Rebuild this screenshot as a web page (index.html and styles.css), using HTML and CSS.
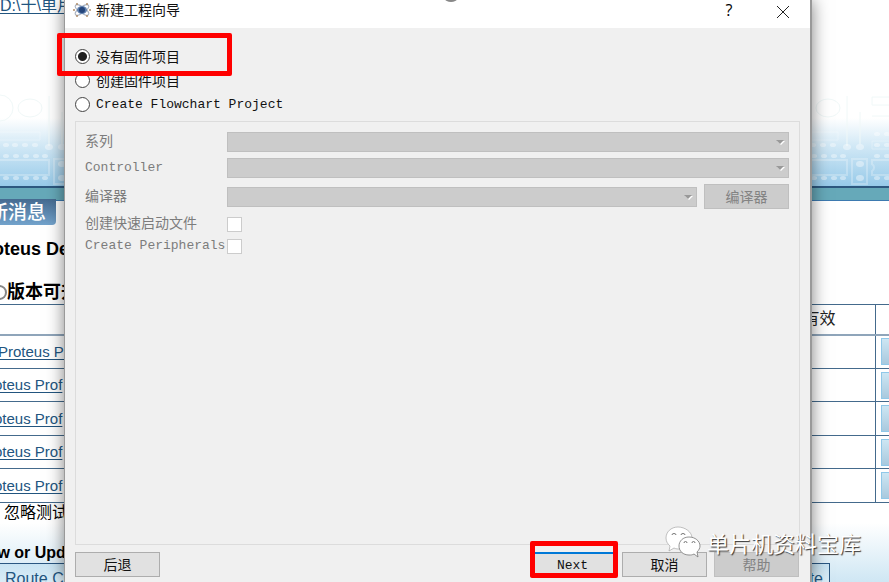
FILE: index.html
```html
<!DOCTYPE html>
<html lang="zh-CN">

<head>
    <meta charset="UTF-8">
    <meta name="viewport" content="width=device-width, initial-scale=1.0">
    <title>新建工程向导</title>
    <link rel="stylesheet" href="styles.css">
</head>

<body>
    <!-- Start page behind the wizard -->
    <main class="home">
        <header class="banner">
            <a class="recent" href="#">D:\十\单片</a>
            <svg class="board" width="1600" height="186" fill="none" stroke="#fff" stroke-width="2">
                <defs>
                    <g id="chips">
                        <g stroke="#f0f8f8" stroke-width="1">
                            <circle cx="0" cy="108" r="13" />
                            <ellipse cx="30" cy="108" rx="12" ry="9" />
                            <path d="M49 96v50M62 112v32M74 97h30v8H74zM74 116h30v14" />
                        </g>
                        <g opacity=".25">
                            <path d="M-40 160h89v15h-89zM54 159h15v25H54zM74 160h40v15H74v-4a4 4 0 0 0 0-7z" />
                            <path stroke-width="1" d="M-40 140h80v-8h-80M74 141h40v8H74z" />
                        </g>
                        <g fill="#fff" stroke="none" opacity=".4">
                            <ellipse cx="6" cy="145" rx="3" ry="2" />
                            <ellipse cx="15" cy="145" rx="3" ry="2" />
                            <ellipse cx="25" cy="145" rx="3" ry="2" />
                            <ellipse cx="35" cy="145" rx="3" ry="2" />
                            <ellipse cx="49" cy="147" rx="4" ry="3" />
                            <ellipse cx="62" cy="147" rx="4" ry="3" />
                            <ellipse cx="79" cy="145" rx="3" ry="2" />
                            <ellipse cx="89" cy="145" rx="3" ry="2" />
                            <ellipse cx="79" cy="134" rx="3" ry="2" />
                            <ellipse cx="89" cy="134" rx="3" ry="2" />
                            <ellipse cx="6" cy="156" rx="3" ry="2" />
                            <ellipse cx="16" cy="156" rx="3" ry="2" />
                            <ellipse cx="26" cy="156" rx="3" ry="2" />
                            <ellipse cx="36" cy="156" rx="3" ry="2" />
                            <ellipse cx="45" cy="156" rx="3" ry="2" />
                            <ellipse cx="79" cy="156" rx="3" ry="2" />
                            <ellipse cx="89" cy="156" rx="3" ry="2" />
                            <ellipse cx="62" cy="164" rx="4" ry="3" />
                            <ellipse cx="62" cy="178" rx="4" ry="3" />
                            <ellipse cx="6" cy="178" rx="3" ry="2" />
                            <ellipse cx="16" cy="178" rx="3" ry="2" />
                            <ellipse cx="26" cy="178" rx="3" ry="2" />
                            <ellipse cx="36" cy="178" rx="3" ry="2" />
                            <ellipse cx="45" cy="178" rx="3" ry="2" />
                            <ellipse cx="79" cy="178" rx="3" ry="2" />
                            <ellipse cx="89" cy="178" rx="3" ry="2" />
                        </g>
                    </g>
                </defs>
                <use href="#chips" />
                <use href="#chips" x="798" />
            </svg>
        </header>
        <div class="band"></div>

        <section class="news">
            <h2 class="tab">新消息</h2>
            <h3 class="product">Proteus De</h3>
            <h4 class="update"><span class="bullet"></span>版本可升</h4>
            <table class="versions">
                <colgroup>
                    <col>
                    <col class="col-valid">
                    <col class="col-action">
                </colgroup>
                <thead>
                    <tr>
                        <th></th>
                        <th>有效</th>
                        <th></th>
                    </tr>
                </thead>
                <tbody>
                    <tr>
                        <td class="current"><a href="#">Proteus Pro</a></td>
                        <td></td>
                        <td><button class="get" aria-label="下载"></button></td>
                    </tr>
                    <tr>
                        <td><a href="#">Proteus Prof</a></td>
                        <td></td>
                        <td><button class="get" aria-label="下载"></button></td>
                    </tr>
                    <tr>
                        <td><a href="#">Proteus Prof</a></td>
                        <td></td>
                        <td><button class="get" aria-label="下载"></button></td>
                    </tr>
                    <tr>
                        <td><a href="#">Proteus Prof</a></td>
                        <td></td>
                        <td><button class="get" aria-label="下载"></button></td>
                    </tr>
                    <tr>
                        <td><a href="#">Proteus Prof</a></td>
                        <td></td>
                        <td><button class="get" aria-label="下载"></button></td>
                    </tr>
                </tbody>
            </table>
            <p class="ignore">忽略测试</p>
        </section>

        <section class="videos">
            <h3 class="videos-title">New or Upd</h3>
            <div class="video-row">
                <a class="video" href="#"><span>Route Co</span><span>te</span></a>
            </div>
        </section>
    </main>

    <!-- Wizard window -->
    <form class="wizard">
        <header class="titlebar">
            <svg class="app-icon" width="18" height="16" viewBox="0 0 18 16" fill="none">
                <g stroke="#a9b2c0">
                    <ellipse cx="9" cy="8" rx="8" ry="3" transform="rotate(35 9 8)" />
                    <ellipse cx="9" cy="8" rx="8" ry="3" transform="rotate(-35 9 8)" />
                </g>
                <ellipse cx="9" cy="8" rx="5" ry="4" fill="#5f7fae" />
                <circle cx="9" cy="8" r="3" fill="#23447a" />
                <g fill="#b08d68">
                    <circle cx="4" cy="2" r="1" />
                    <circle cx="14" cy="2" r="1" />
                    <circle cx="4" cy="14" r="1" />
                    <circle cx="14" cy="14" r="1" />
                    <circle cx="1" cy="8" r="1" />
                    <circle cx="17" cy="8" r="1" />
                </g>
            </svg>
            <h1>新建工程向导</h1>
            <button type="button" class="window-btn">?</button>
            <button type="button" class="window-btn" aria-label="关闭">
                <svg width="14" height="14" viewBox="0 0 14 14" stroke="#222">
                    <path d="M1 1l12 12M13 1L1 13" />
                </svg>
            </button>
        </header>

        <div class="choices">
            <label><input type="radio" name="firmware" checked>没有固件项目</label>
            <label><input type="radio" name="firmware">创建固件项目</label>
            <label class="latin"><input type="radio" name="firmware">Create Flowchart Project</label>
        </div>

        <fieldset class="options" disabled>
            <div class="field">
                <label for="family">系列</label>
                <div class="select"><select id="family"></select></div>
            </div>
            <div class="field">
                <label class="latin" for="controller">Controller</label>
                <div class="select"><select id="controller"></select></div>
            </div>
            <div class="field field-compiler">
                <label for="compiler">编译器</label>
                <div class="select"><select id="compiler"></select></div>
                <button type="button" class="btn">编译器</button>
            </div>
            <div class="field field-check">
                <label for="quick">创建快速启动文件</label>
                <input type="checkbox" id="quick">
            </div>
            <div class="field field-check">
                <label class="latin" for="peripherals">Create Peripherals</label>
                <input type="checkbox" id="peripherals">
            </div>
        </fieldset>

        <footer class="actions">
            <button type="button" class="btn btn-back">后退</button>
            <button type="submit" class="btn btn-next latin">Next</button>
            <button type="button" class="btn">取消</button>
            <button type="button" class="btn" disabled>帮助</button>
        </footer>
        <span class="grip"></span>
        <span class="mark mark-choice"></span>
        <span class="mark mark-next"></span>
    </form>

    <!-- Account signature -->
    <div class="signature">
        <svg width="36" height="32" viewBox="0 0 36 32" fill="#fff">
            <path stroke="#999" stroke-width=".6"
                d="M13 1C6 1 1 6 1 12c0 4 2 6 4 8l-1 5 5-3c2 1 4 1 6 1 6 0 12-5 12-11S20 1 13 1z" />
            <path stroke="#777" stroke-width=".8"
                d="M24 11c-6 0-10 4-10 9s4 9 10 9c2 0 3 0 5-1l4 3-1-5c2-2 3-4 3-6 0-5-5-9-11-9z" />
            <path fill="none" stroke="#777"
                d="M7 9a2 1.500 0 0 1 4 0M16 9a2 1.500 0 0 1 4 0M19 17a1.500 1.500 0 0 1 3 0M27 17a1.500 1.500 0 0 1 3 0" />
        </svg>
        <span>单片机资料宝库</span>
    </div>
</body>

</html>
```
FILE: styles.css
```css
* {
    box-sizing: border-box;
}

body {
    margin: 0;
    height: 100vh;
    overflow: hidden;
    position: relative;
    background-color: #fff;
    font-family: "Liberation Sans", "Noto Sans CJK SC", sans-serif;
}

h1,
h2,
h3,
h4,
p {
    margin: 0;
}

a {
    color: #22557f;
}

/* Start page */
.home {
    height: 100%;
    overflow: hidden;
    display: flex;
    flex-direction: column;
}

.banner {
    flex: none;
    height: 188px;
    overflow: hidden;
    position: relative;
    background: linear-gradient(#fff 118px, #d3e9f6 145px, #97cae9);
    border-bottom: 2px solid #2d587f;
}

.recent {
    display: block;
    margin-top: -5px;
    font-size: 16px;
    line-height: 22px;
    text-underline-offset: 2px;
}

.board {
    position: absolute;
    top: 0;
    left: 0;
}

.band {
    flex: none;
    height: 13px;
    background-color: #66a9b9;
    border-bottom: 1px solid #3d7ab0;
}

.news {
    flex: none;
    margin: 0 -40px 0 -10px;
}

.tab {
    width: 66px;
    height: 26px;
    margin-top: -2px;
    padding-right: 10px;
    display: flex;
    justify-content: flex-end;
    overflow: hidden;
    border-radius: 0 0 4px 0;
    background: linear-gradient(#456a90, #73a3cc);
    color: #fff;
    font-size: 19px;
    font-weight: 500;
    line-height: 28px;
    white-space: nowrap;
}

.product {
    margin: 13px 0 0 -16px;
    font-size: 18px;
    line-height: 22px;
}

.update {
    display: flex;
    align-items: center;
    margin: 20px 0 0 2px;
    font-size: 18px;
    line-height: 24px;
}

.bullet {
    width: 15px;
    height: 15px;
    border: 2px solid #888;
    border-radius: 50%;
}

.versions {
    width: 100%;
    table-layout: fixed;
    border-collapse: collapse;
    font-size: 15px;
    line-height: 20px;
}

.col-valid {
    width: 112px;
}

.col-action {
    width: 53px;
}

.versions th,
.versions td {
    height: 34px;
    padding: 0 5px;
    border: 1px solid #446a8c;
}

.versions th {
    height: 30px;
    border-bottom: 2px solid #8fa5ba;
    color: #222;
    font-size: 16px;
    font-weight: normal;
}

.versions tr:nth-child(even) td {
    height: 33px;
}

.versions td:first-child {
    text-indent: -17px;
}

.versions td.current {
    text-indent: 2px;
}

.versions a {
    text-underline-offset: 2px;
}

.get {
    display: block;
    width: 42px;
    height: 27px;
    padding: 0;
    border: 1px solid #90c8e9;
    background: linear-gradient(#cde6f3, #a9c9de);
}

.ignore {
    padding-left: 14px;
    font-size: 16px;
    line-height: 20px;
}

.videos {
    flex: 1;
    padding-top: 20px;
    background: linear-gradient(#fff, #c4e1f1);
}

.videos-title {
    margin-left: -23px;
    font-size: 16px;
    line-height: 20px;
}

.video-row {
    margin: 0 59px 0 -2px;
}

.video {
    display: flex;
    justify-content: space-between;
    padding: 5px 6px;
    border: 1px solid #2a5782;
    background: linear-gradient(#c9e4f3, #e4f2f9);
    font-size: 16px;
    line-height: 20px;
    text-decoration: none;
}

/* Wizard window */
.wizard {
    position: absolute;
    top: 0;
    bottom: 0;
    left: 64px;
    right: 77px;
    display: flex;
    flex-direction: column;
    padding-bottom: 5px;
    background-color: #f0f0f0;
    border: solid #999;
    border-width: 0 2px 0 1px;
    box-shadow: 0 0 16px rgba(0, 0, 0, 0.5);
    color: #111;
    font-family: "Liberation Mono", "Noto Sans CJK SC", monospace;
    font-size: 14px;
}

.wizard .latin {
    font-size: 13px;
}

.titlebar {
    display: flex;
    align-items: flex-start;
    height: 28px;
    padding-left: 8px;
    background-color: #fff;
}

.app-icon {
    margin: 2px 5px 0 0;
}

.titlebar h1 {
    flex: 1;
    font-family: "Noto Sans CJK SC", sans-serif;
    font-size: 14px;
    font-weight: normal;
    line-height: 19px;
}

.window-btn {
    width: 54px;
    height: 20px;
    padding: 0;
    border: 0;
    background: none;
    font-family: "Open Sans", sans-serif;
    font-size: 16px;
    line-height: 20px;
}

.window-btn svg {
    display: block;
    margin: 3px auto 0;
}

.choices {
    display: flex;
    flex-direction: column;
    padding: 16px 0 0 10px;
}

.choices label {
    display: flex;
    align-items: center;
    gap: 6px;
    height: 24px;
}

.choices .latin {
    height: 25px;
}

.choices input {
    appearance: none;
    width: 15px;
    height: 15px;
    margin: 0;
    border: 1px solid #444;
    border-radius: 50%;
    background-color: #fff;
}

.choices input:checked {
    background: radial-gradient(circle, #222 4px, #fff 5px);
}

.options {
    flex: 1;
    min-width: 0;
    margin: 4px 10px 0 10px;
    padding: 10px 10px 0 9px;
    border: 1px solid #dcdcdc;
    color: #7c7c7c;
}

.field {
    display: flex;
    align-items: center;
    gap: 7px;
    height: 20px;
    margin-bottom: 6px;
}

.field label {
    flex: none;
    width: 135px;
    line-height: 18px;
    white-space: nowrap;
}

.field-compiler {
    height: 25px;
    margin-bottom: 4px;
}

.field-check {
    height: 22px;
    margin-bottom: 0;
}

.select {
    flex: 1;
    position: relative;
    height: 20px;
}

.select select {
    appearance: none;
    display: block;
    width: 100%;
    height: 100%;
    border: 1px solid #bfbfbf;
    border-radius: 0;
    background-color: #ccc;
    opacity: 1;
}

.select::after {
    content: "";
    position: absolute;
    top: 8px;
    right: 5px;
    border: 4px solid transparent;
    border-top-color: #999;
    border-bottom: 0;
    filter: drop-shadow(1px 1px 0 #fff);
}

.field input {
    appearance: none;
    width: 15px;
    height: 15px;
    margin: 0;
    border: 1px solid #ccc;
    background-color: #fff;
}

.btn {
    width: 85px;
    height: 25px;
    padding: 0 0 2px;
    border: 1px solid #adadad;
    background-color: #e1e1e1;
    color: #111;
    font-family: inherit;
    font-size: 14px;
}

.btn:disabled {
    border-color: #bfbfbf;
    background-color: #ccc;
    color: #838383;
}

.actions {
    display: flex;
    gap: 7px;
    padding: 7px 11px 0 10px;
}

.btn-back {
    margin-right: auto;
}

.btn-next {
    padding: 0;
    border-top: 2px solid #0078d7;
}

.grip {
    position: absolute;
    top: -4px;
    left: 380px;
    width: 12px;
    height: 6px;
    border-radius: 50%;
    background-color: #888;
}

/* Highlights */
.mark {
    position: absolute;
    border: 5px solid #f00;
    border-radius: 2px;
}

.mark-choice {
    top: 33px;
    left: -8px;
    width: 175px;
    height: 43px;
}

.mark-next {
    right: 192px;
    bottom: 4px;
    width: 88px;
    height: 37px;
}

.signature {
    position: absolute;
    right: 28px;
    bottom: 24px;
    display: flex;
    align-items: center;
    gap: 6px;
    color: #fff;
    font-family: "Noto Sans CJK SC", sans-serif;
    font-size: 22px;
    line-height: 32px;
    text-shadow: 1px 1px 1px #333;
}
```
